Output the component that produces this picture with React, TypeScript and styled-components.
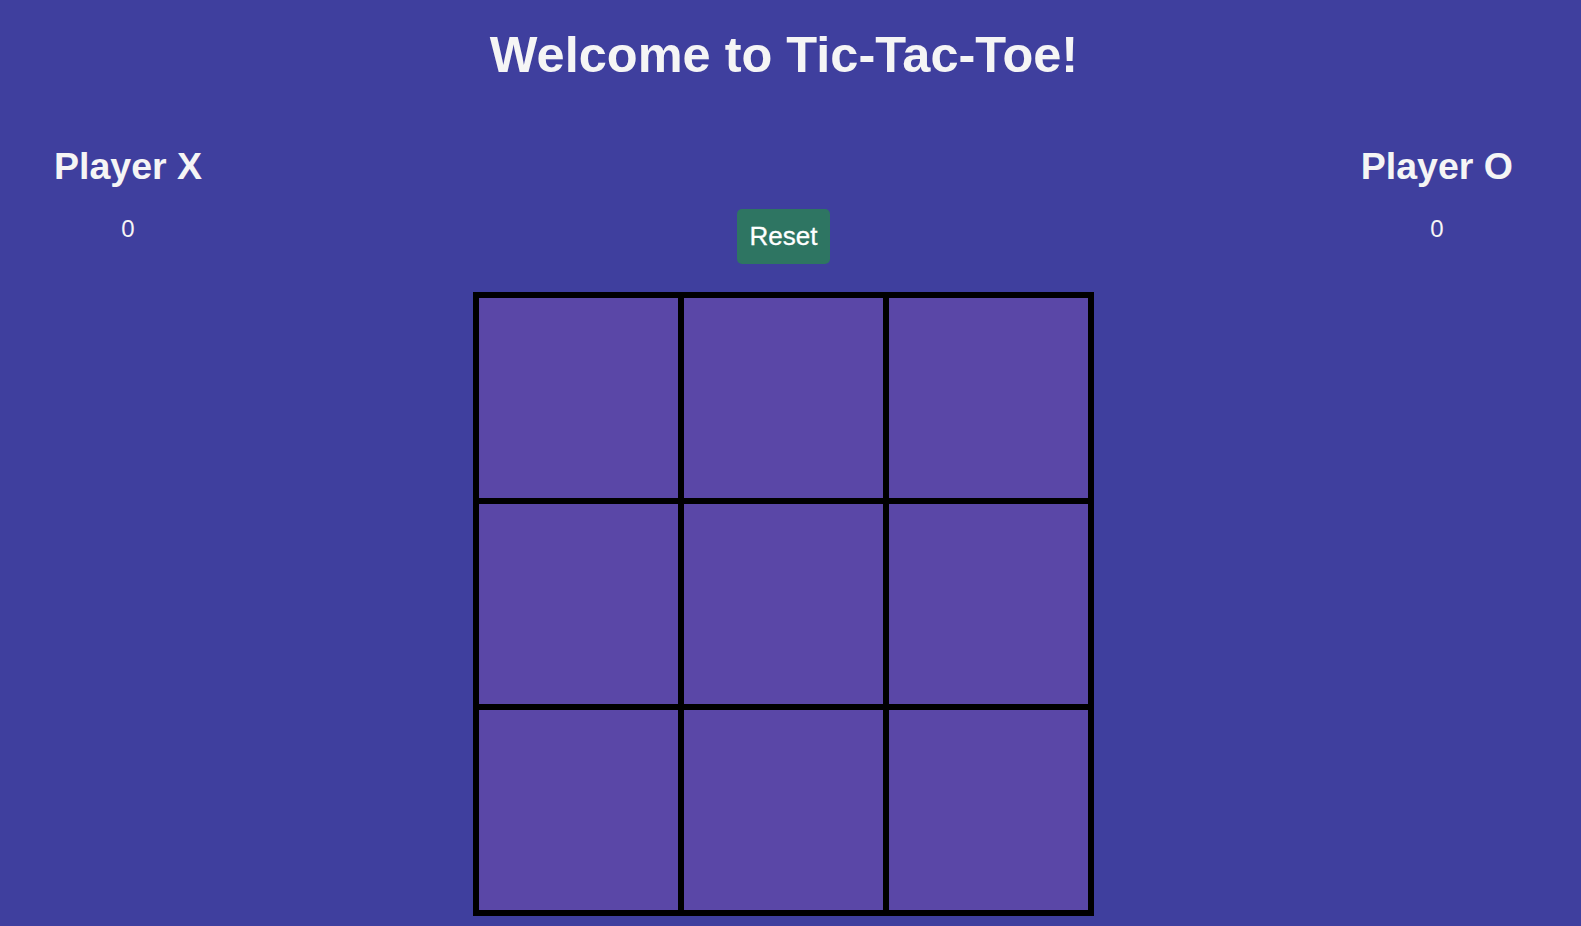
import React, { useState } from "react";
import styled, { createGlobalStyle } from "styled-components";

const GlobalStyle = createGlobalStyle`
  html, body {
    margin: 0;
    padding: 0;
    background: #3f3f9e;
    overflow: hidden;
  }
  body {
    font-family: "Liberation Sans", Arial, sans-serif;
    color: #f5f5f5;
  }
`;

const Page = styled.div`
  width: calc(100% - 13px);
  min-height: 926px;
`;

const Title = styled.h1`
  margin: 0;
  padding-top: 26px;
  font-size: 50.5px;
  line-height: 57px;
  font-weight: 700;
  text-align: center;
  color: #f5f5f5;
`;

const Main = styled.div`
  display: grid;
  grid-template-columns: 1fr auto 1fr;
  align-items: start;
  padding: 0 55px 0 54px;
`;

const PlayerCard = styled.div<{ $side: "left" | "right" }>`
  justify-self: ${(p) => (p.$side === "left" ? "start" : "end")};
  display: flex;
  flex-direction: column;
  align-items: center;
  margin-top: 62px;
`;

const PlayerName = styled.h2`
  margin: 0;
  font-size: 37.5px;
  line-height: 42.5px;
  font-weight: 700;
  color: #f5f5f5;
`;

const Score = styled.div`
  margin-top: 27px;
  font-size: 24px;
  line-height: 28px;
  color: #f5f5f5;
`;

const Center = styled.div`
  display: flex;
  flex-direction: column;
  align-items: center;
  margin-top: 126px;
`;

const ResetButton = styled.button`
  height: 55px;
  padding: 0 13px;
  border: none;
  border-radius: 5px;
  background: #2e7562;
  color: #ffffff;
  font-family: "Liberation Sans", Arial, sans-serif;
  font-size: 26px;
  font-weight: 400;
  -webkit-text-stroke: 0.3px #ffffff;
  cursor: pointer;
`;

const Board = styled.div`
  margin-top: 28px;
  display: grid;
  grid-template-columns: repeat(3, auto);
  border: 3px solid #000;
`;

const Cell = styled.button`
  box-sizing: content-box;
  width: 199px;
  height: 200px;
  padding: 0;
  margin: 0;
  border: 3px solid #000;
  border-radius: 0;
  background: #5a47a7;
  color: #fff;
  font-family: "Liberation Sans", Arial, sans-serif;
  font-size: 96px;
  font-weight: 700;
  cursor: pointer;
`;

export default function App() {
  const [cells, setCells] = useState<(string | null)[]>(Array(9).fill(null));
  const [xTurn, setXTurn] = useState(true);

  const play = (i: number) => {
    if (cells[i]) return;
    const next = cells.slice();
    next[i] = xTurn ? "X" : "O";
    setCells(next);
    setXTurn(!xTurn);
  };

  const reset = () => {
    setCells(Array(9).fill(null));
    setXTurn(true);
  };

  return (
    <>
      <GlobalStyle />
      <Page>
        <Title>Welcome to Tic-Tac-Toe!</Title>
        <Main>
          <PlayerCard $side="left">
            <PlayerName>Player X</PlayerName>
            <Score>0</Score>
          </PlayerCard>
          <Center>
            <ResetButton onClick={reset}>Reset</ResetButton>
            <Board>
              {cells.map((c, i) => (
                <Cell key={i} onClick={() => play(i)}>
                  {c}
                </Cell>
              ))}
            </Board>
          </Center>
          <PlayerCard $side="right">
            <PlayerName>Player O</PlayerName>
            <Score>0</Score>
          </PlayerCard>
        </Main>
      </Page>
    </>
  );
}
